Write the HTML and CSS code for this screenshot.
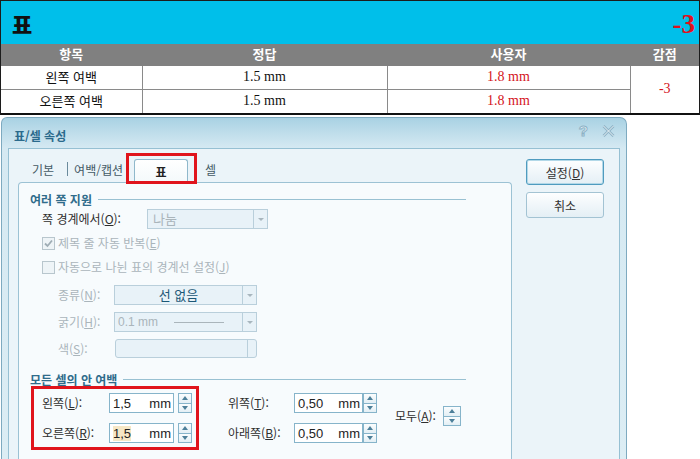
FILE: index.html
```html
<!DOCTYPE html>
<html lang="ko">
<head>
<meta charset="utf-8">
<title>표/셀 속성</title>
<link rel="stylesheet" href="styles.css">
</head>
<body>
<div class="report">
  <div class="banner"><span class="banner-title">표</span><span class="banner-score">-3</span></div>
  <table class="grid">
    <colgroup><col class="c1"><col class="c2"><col class="c3"><col class="c4"></colgroup>
    <thead><tr><th>항목</th><th>정답</th><th>사용자</th><th>감점</th></tr></thead>
    <tbody>
      <tr><td class="ko">왼쪽 여백</td><td class="num">1.5 mm</td><td class="num red">1.8 mm</td><td class="num red" rowspan="2">-3</td></tr>
      <tr><td class="ko">오른쪽 여백</td><td class="num">1.5 mm</td><td class="num red">1.8 mm</td></tr>
    </tbody>
  </table>
</div>

<div class="dialog">
  <div class="titlebar">
    <span class="dlg-title">표/셀 속성</span>
    <span class="tb-icons">
      <span class="help">?</span>
      <svg class="close" width="13" height="12" viewBox="0 0 13 12"><path d="M1.5 1 L11.5 11 M11.5 1 L1.5 11" stroke="#8db2c6" stroke-width="2.6" fill="none"/><path d="M1.5 1 L11.5 11 M11.5 1 L1.5 11" stroke="#f4f9fb" stroke-width="0.9" fill="none"/></svg>
    </span>
  </div>
  <div class="dlg-body">
    <div class="main">
      <div class="tabs">
        <span class="tab t-basic">기본</span>
        <span class="tab-sep"></span>
        <span class="tab t-margin">여백/캡션</span>
        <span class="tab active">표<span class="mark mark-tab"></span></span>
        <span class="tab t-cell">셀</span>
      </div>
      <div class="panel">
        <div class="section">여러 쪽 지원</div>

        <div class="row r-split">
          <span class="lbl w105">쪽 경계에서(<u>O</u>):</span>
          <span class="combo c-split"><span class="cv dis">나눔</span><span class="arrow"></span></span>
        </div>

        <div class="row r-chk1">
          <span class="chk checked"><svg width="11" height="11" viewBox="0 0 11 11"><path d="M2 5.5 L4.5 8 L9 2.5" stroke="#9fadb5" stroke-width="1.8" fill="none"/></svg></span>
          <span class="lbl dis">제목 줄 자동 반복(<u>E</u>)</span>
        </div>

        <div class="row r-chk2">
          <span class="chk"></span>
          <span class="lbl dis">자동으로 나뉜 표의 경계선 설정(<u>J</u>)</span>
        </div>

        <div class="row sub r-kind">
          <span class="lbl dis w56">종류(<u>N</u>):</span>
          <span class="combo c-kind"><span class="cv center teal">선 없음</span><span class="arrow"></span></span>
        </div>

        <div class="row sub r-thick">
          <span class="lbl dis w56">굵기(<u>H</u>):</span>
          <span class="combo c-kind"><span class="cv dis mono">0.1 mm<span class="sample-line"></span></span><span class="arrow"></span></span>
        </div>

        <div class="row sub r-color">
          <span class="lbl dis w57">색(<u>S</u>):</span>
          <span class="combo c-color"><span class="cv"></span><span class="arrow plain"></span></span>
        </div>

        <div class="section s2">모든 셀의 안 여백</div>

        <div class="margins">
          <div class="mgroup g-left">
            <span class="lbl">왼쪽(<u>L</u>):</span>
            <span class="input"><span class="val">1,5</span><span class="unit">mm</span></span>
            <span class="spin"><span class="up"></span><span class="down"></span></span>
            <span class="lbl">오른쪽(<u>R</u>):</span>
            <span class="input"><span class="val hl">1,5</span><span class="unit">mm</span></span>
            <span class="spin"><span class="up"></span><span class="down"></span></span>
            <span class="mark mark-margin"></span>
          </div>
          <div class="mgroup g-mid">
            <span class="lbl">위쪽(<u>T</u>):</span>
            <span class="input"><span class="val">0,50</span><span class="unit">mm</span></span>
            <span class="spin"><span class="up"></span><span class="down"></span></span>
            <span class="lbl">아래쪽(<u>B</u>):</span>
            <span class="input"><span class="val">0,50</span><span class="unit">mm</span></span>
            <span class="spin"><span class="up"></span><span class="down"></span></span>
          </div>
          <div class="all">
            <span class="lbl">모두(<u>A</u>):</span>
            <span class="spin tall"><span class="up"></span><span class="down"></span></span>
          </div>
        </div>
      </div>
    </div>
    <div class="buttons">
      <button class="btn default">설정(<u>D</u>)</button>
      <button class="btn">취소</button>
    </div>
  </div>
</div>
</body>
</html>
```

FILE: styles.css
```css
* { box-sizing: border-box; }
html, body { margin: 0; padding: 0; background: #ffffff; }
body {
  width: 700px;
  height: 459px;
  overflow: hidden;
  font-family: "Noto Sans CJK KR", "Noto Sans", sans-serif;
  font-size: 12px;
  color: #333;
}
u { text-decoration: underline; text-underline-offset: 1px; }

/* ---------- report ---------- */
.report {
  width: 700px;
  border: 1px solid #1c1c1c;
  border-bottom: 2px solid #111;
}
.banner {
  height: 43px;
  background: #00bfea;
  display: flex;
  align-items: center;
  justify-content: space-between;
  padding: 0 4px 0 11px;
}
.banner-title {
  font-family: "Noto Sans CJK KR", sans-serif;
  font-weight: 900;
  font-size: 22px;
  line-height: 24px;
  color: #111;
}
.banner-score {
  font-family: "Liberation Serif", serif;
  font-weight: bold;
  font-size: 27px;
  line-height: 28px;
  color: #e0101c;
  margin-top: 3px;
}
.grid {
  width: 698px;
  border-collapse: collapse;
  border-style: hidden;
  table-layout: fixed;
}
.c1 { width: 141px; }
.c2 { width: 245px; }
.c3 { width: 243px; }
.c4 { width: 69px; }
.grid th {
  height: 21px;
  padding: 0;
  background: #808080;
  color: #fff;
  font-weight: bold;
  font-size: 13px;
  line-height: 16px;
  border: 1px solid #808080;
}
.grid td {
  height: 24px;
  padding: 0;
  text-align: center;
  border: 1px solid #8a8a8a;
  line-height: 16px;
}
.grid td.ko { font-size: 13px; color: #111; }
.grid td.num { font-family: "Liberation Serif", serif; font-size: 14px; color: #111; }
.grid td.red { color: #d4141c; }

/* ---------- dialog ---------- */
.dialog {
  margin: 2px 0 0 1px;
  width: 626px;
  height: 342px;
  overflow: hidden;
  border: 1px solid #7eaac0;
  border-bottom: none;
  border-radius: 6px 7px 0 0;
  background: linear-gradient(#a9d2e3 0px, #d5e9f2 30px, #dcedf4 100%);
  padding: 0 6px;
}
.titlebar {
  height: 30px;
  display: flex;
  align-items: center;
  justify-content: space-between;
  padding: 4px 5px 0 6px;
}
.dlg-title {
  font-weight: bold;
  font-size: 12px;
  color: #2a6a8c;
}
.tb-icons { display: flex; align-items: center; gap: 14px; margin-top: -8px; }
.help {
  font-family: "Liberation Sans", sans-serif;
  font-weight: bold;
  font-size: 15px;
  color: #f2f8fb;
  -webkit-text-stroke: 1px #8db2c6;
  line-height: 14px;
}
.dlg-body {
  height: 311px;
  border: 1px solid #96c0d3;
  border-bottom: none;
  background: #ebf4f9;
  display: flex;
}
.main { margin-left: 9px; width: 494px; }

/* tabs */
.tabs {
  height: 33px;
  display: flex;
  align-items: flex-end;
  position: relative;
  z-index: 1;
}
.tab {
  height: 23px;
  line-height: 22px;
  font-size: 12px;
  color: #445a66;
  white-space: nowrap;
}
.t-basic { margin-left: 14px; }
.tab-sep {
  width: 1px;
  height: 14px;
  background: #6a8a9c;
  margin: 0 0 6px 13px;
  align-self: flex-end;
}
.t-margin { margin-left: 6px; width: 60px; overflow: hidden; }
.tab.active {
  position: relative;
  width: 54px;
  height: 24px;
  margin-left: 0;
  margin-bottom: -1px;
  text-align: center;
  border: 1px solid #8fb8cb;
  border-bottom: none;
  border-radius: 3px 3px 0 0;
  background: linear-gradient(#ffffff, #f3f9fb);
  color: #222;
  font-weight: bold;
  line-height: 24px;
}
.t-cell { margin-left: 17px; }

.mark {
  position: absolute;
  border: 3px solid #e0141c;
  pointer-events: none;
}
.mark-tab { left: -9px; top: -7px; width: 71px; height: 31px; }

/* panel */
.panel {
  height: 278px;
  overflow: hidden;
  border: 1px solid #9cc2d4;
  border-bottom: none;
  border-radius: 4px 4px 0 0;
  background: #f7fbfd;
  padding: 8px 45px 0 11px;
}
.section {
  display: flex;
  align-items: center;
  height: 16px;
  font-weight: bold;
  font-size: 12px;
  color: #2f6c8b;
}
.section::after {
  content: "";
  flex: 1;
  height: 1px;
  background: #99c1d2;
  margin-left: 6px;
}
.s2 { margin-top: 13px; }

.row { display: flex; align-items: center; padding-left: 12px; }
.row.sub { padding-left: 28px; }
.lbl { font-size: 12px; line-height: 16px; color: #2e2e2e; white-space: nowrap; }
.lbl.dis { color: #aab5bb; }
.w105 { width: 105px; }
.w56 { width: 56px; }
.w57 { width: 57px; }

.r-split { margin-top: 2px; height: 20px; }
.r-chk1 { margin-top: 5px; height: 18px; }
.r-chk2 { margin-top: 6px; height: 18px; }
.r-kind { margin-top: 9px; height: 20px; }
.r-thick { margin-top: 7px; height: 20px; }
.r-color { margin-top: 7px; height: 19px; }

.chk {
  width: 13px;
  height: 13px;
  border: 1px solid #b8c6cd;
  background: #eef4f7;
  margin-right: 3px;
  display: flex;
  align-items: center;
  justify-content: center;
}

.combo {
  display: flex;
  height: 20px;
  border: 1px solid #b9cfdb;
  background: #e8f2f8;
}
.c-split { width: 121px; }
.c-kind { width: 143px; }
.c-color { width: 142px; height: 19px; border-radius: 3px; }
.cv {
  flex: 1;
  padding-left: 5px;
  line-height: 18px;
  font-size: 13px;
  display: flex;
  align-items: center;
}
.cv.dis { color: #aab5bb; }
.cv.center { justify-content: center; padding-left: 0; }
.cv.teal { color: #1b5877; }
.cv.mono { font-family: "Liberation Sans", sans-serif; font-size: 12px; padding-left: 3px; }
.sample-line {
  width: 50px;
  height: 1px;
  background: #aab5bb;
  margin-left: 16px;
}
.arrow {
  width: 14px;
  border-left: 1px solid #b9cfdb;
  display: flex;
  align-items: center;
  justify-content: center;
}
.arrow::after {
  content: "";
  border-left: 3px solid transparent;
  border-right: 3px solid transparent;
  border-top: 3px solid #a8b6be;
}
.arrow.plain { width: 9px; }
.arrow.plain::after { display: none; }

/* margins */
.margins {
  margin-top: 6px;
  display: flex;
  align-items: center;
  padding-left: 12px;
}
.mgroup {
  display: grid;
  row-gap: 10px;
  align-items: center;
  position: relative;
}
.g-left { grid-template-columns: 67px 65px 18px; }
.g-left .spin { margin-left: 4px; }
.g-mid { margin-left: 36px; grid-template-columns: 66px 69px 14px; }
.input {
  height: 20px;
  border: 1px solid #86b4ca;
  background: #fff;
  display: flex;
  align-items: center;
  justify-content: space-between;
  padding: 0 2px 0 3px;
  font-family: "Liberation Sans", sans-serif;
  font-size: 13px;
  color: #222;
}
.val.hl { background: #f6e7c6; }
.spin {
  height: 20px;
  width: 14px;
  display: flex;
  flex-direction: column;
  border: 1px solid #86b4ca;
  background: #fff;
}
.spin .up, .spin .down {
  flex: 1;
  display: flex;
  align-items: center;
  justify-content: center;
  background: linear-gradient(#fbfdfe, #e3eff5);
}
.spin .up { border-bottom: 1px solid #86b4ca; }
.spin .up::after {
  content: "";
  border-left: 3.5px solid transparent;
  border-right: 3.5px solid transparent;
  border-bottom: 4px solid #4d7f99;
}
.spin .down::after {
  content: "";
  border-left: 3.5px solid transparent;
  border-right: 3.5px solid transparent;
  border-top: 4px solid #4d7f99;
}
.spin.tall { width: 18px; height: 20px; margin-left: 1px; }
.all { display: flex; align-items: center; margin-left: 18px; margin-top: -4px; }
.all .lbl { width: 47px; }
.mark-margin { left: -11px; top: -7px; width: 168px; height: 64px; }

/* buttons */
.buttons {
  margin-left: 14px;
  padding-top: 10px;
  display: flex;
  flex-direction: column;
  gap: 7px;
}
.btn {
  width: 78px;
  height: 26px;
  border: 1px solid #a3c3d3;
  border-radius: 3px;
  background: linear-gradient(#fdfeff, #e4eff5);
  font-family: "Noto Sans CJK KR", sans-serif;
  font-size: 12px;
  color: #333;
  padding: 0;
}
.btn.default {
  border-color: #4f9bbf;
  box-shadow: inset 0 0 0 1px #b2d8e8;
}
```
